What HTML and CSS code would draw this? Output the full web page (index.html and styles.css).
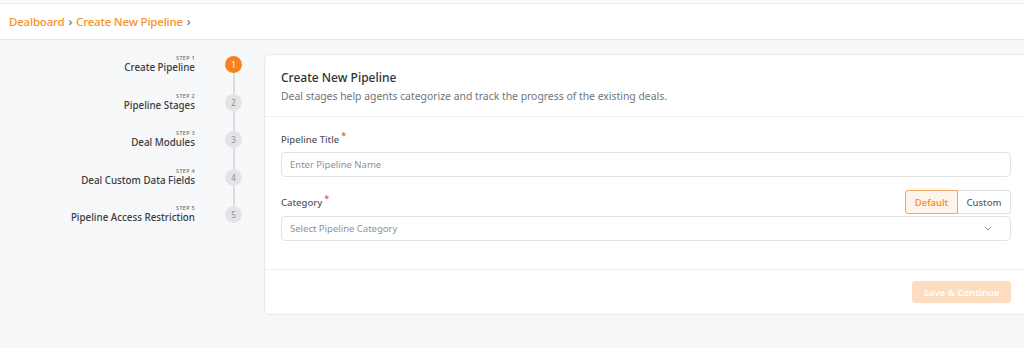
FILE: index.html
```html
<!DOCTYPE html>
<html>
<head>
<meta charset="utf-8">
<link rel="stylesheet" href="styles.css">
</head>
<body>
<header class="topbar">
  <nav class="crumbs">
    <span class="crumb">Dealboard</span><span class="sep">›</span><span class="crumb">Create New Pipeline</span><span class="sep">›</span>
  </nav>
</header>
<main class="main">
  <aside class="steps">
    <div class="step active">
      <div class="step-text"><div class="step-no">STEP 1</div><div class="step-label">Create Pipeline</div></div>
      <div class="dot">1</div>
    </div>
    <div class="step">
      <div class="step-text"><div class="step-no">STEP 2</div><div class="step-label">Pipeline Stages</div></div>
      <div class="dot">2</div>
    </div>
    <div class="step">
      <div class="step-text"><div class="step-no">STEP 3</div><div class="step-label">Deal Modules</div></div>
      <div class="dot">3</div>
    </div>
    <div class="step">
      <div class="step-text"><div class="step-no">STEP 4</div><div class="step-label">Deal Custom Data Fields</div></div>
      <div class="dot">4</div>
    </div>
    <div class="step last">
      <div class="step-text"><div class="step-no">STEP 5</div><div class="step-label">Pipeline Access Restriction</div></div>
      <div class="dot">5</div>
    </div>
  </aside>
  <section class="card">
    <div class="card-head">
      <h1 class="title">Create New Pipeline</h1>
      <p class="subtitle">Deal stages help agents categorize and track the progress of the existing deals.</p>
    </div>
    <div class="card-body">
      <div class="field">
        <label class="label">Pipeline Title<span class="req">*</span></label>
        <div class="input placeholder">Enter Pipeline Name</div>
      </div>
      <div class="field field-cat">
        <div class="label-row">
          <label class="label">Category<span class="req">*</span></label>
          <div class="toggle">
            <span class="tog on">Default</span><span class="tog">Custom</span>
          </div>
        </div>
        <div class="input select placeholder">
          <span>Select Pipeline Category</span>
          <svg class="chev" width="8" height="5" viewBox="0 0 8 5"><path d="M1 1l3 3 3-3" fill="none" stroke="#8a8d92" stroke-width="1" stroke-linecap="round" stroke-linejoin="round"/></svg>
        </div>
      </div>
    </div>
    <div class="card-foot">
      <button class="btn">Save &amp; Continue</button>
    </div>
  </section>
</main>
</body>
</html>
```
FILE: styles.css
```css
* { box-sizing: border-box; }
html, body { overflow: hidden; }
body {
  margin: 0;
  padding-top: 3px;
  background: #f7f8fa;
  font-family: "Noto Sans", "Open Sans", sans-serif;
  width: 1024px;
  height: 348px;
}
.topbar {
  background: #fff;
  height: 37px;
  border-top: 1px solid #eceef1;
  border-bottom: 1px solid #e6e8eb;
  display: flex;
  align-items: center;
  padding-left: 9px;
}
.crumbs { display: flex; align-items: center; font-size: 11.5px; font-weight: 500; color: #f7922c; letter-spacing: -0.2px; }
.sep { color: #6b6f75; margin: 0 4px; font-size: 12px; }
.main {
  display: flex;
  padding-top: 14px;
}
.steps {
  width: 264px;
  flex: none;
  padding-top: 1px;
  padding-right: 22px;
}
.step {
  height: 37.5px;
  display: flex;
  justify-content: flex-end;
  align-items: flex-start;
  gap: 30px;
  position: relative;
}
.step-text { text-align: right; }
.step-no { font-size: 5.5px; color: #666a70; letter-spacing: 0.3px; line-height: 6px; font-weight: 500; }
.step-label { font-size: 9.8px; color: #3a3d42; line-height: 13px; font-weight: 500; }
.dot {
  width: 17px; height: 17px; border-radius: 50%;
  background: #e3e4e6; color: #8a8d92;
  font-size: 8px; display: flex; align-items: center; justify-content: center;
  flex: none;
  margin-top: 1px;
}
.active .dot { background: #f5821f; color: #fff; }
.step:not(.last)::after {
  content: "";
  position: absolute;
  right: 7.5px;
  top: 18px;
  width: 2px;
  height: 21px;
  background: #dcdee1;
}
.card {
  flex: 1;
  margin-right: -10px;
  background: #fff;
  border: 1px solid #e8e9ed;
  border-radius: 6px;
  height: 261px;
  display: flex;
  flex-direction: column;
}
.card-head {
  padding: 15px 16px 0;
  height: 62px;
  border-bottom: 1px solid #eceef1;
}
.title { margin: 0; font-size: 12px; font-weight: 500; color: #2f3237; line-height: 16px; }
.subtitle { margin: 3px 0 0; font-size: 10.4px; color: #6f737a; line-height: 14px; }
.card-body {
  padding: 16px 22px 0 16px;
  height: 153px;
  border-bottom: 1px solid #eceef1;
}
.label { display: block; font-size: 9.5px; color: #55585e; font-weight: 500; line-height: 13px; }
.req { color: #f0463c; font-size: 9px; position: relative; top: -4px; margin-left: 2px; line-height: 0; }
.input {
  height: 25px;
  border: 1px solid #e0e2e6;
  border-radius: 4px;
  display: flex;
  align-items: center;
  padding: 0 8px;
  font-size: 9.5px;
}
.field .input { margin-top: 6px; }
.placeholder { color: #8e9197; }
.field-cat { margin-top: 13px; }
.label-row { display: flex; justify-content: space-between; align-items: center; height: 24px; }
.label-row .label { padding-top: 1px; }
.field-cat .input { margin-top: 2px; }
.toggle { display: flex; }
.tog {
  height: 24px; width: 53px; display: flex; align-items: center; justify-content: center;
  font-size: 9.5px; color: #5d6066; border: 1px solid #e0e2e6; font-weight: 500;
}
.tog.on { border-color: #f7a35a; background: #fff4ea; color: #f5861f; border-radius: 3px 0 0 3px; }
.tog:last-child { border-left: none; border-radius: 0 3px 3px 0; }
.select { justify-content: space-between; padding-right: 18px; }
.card-foot {
  flex: 1;
  display: flex;
  justify-content: flex-end;
  align-items: flex-start;
  padding: 11px 22px 0 0;
}
.btn {
  width: 99px; height: 22px;
  border: none; border-radius: 4px;
  background: #fdddc0; color: #fff;
  font-family: inherit; font-size: 9.5px; font-weight: 600;
}
```
